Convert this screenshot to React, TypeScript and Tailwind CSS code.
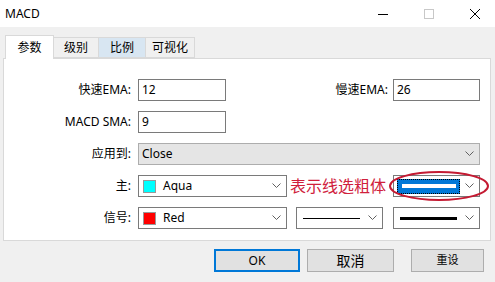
import React from "react";

const font = { fontFamily: '"Noto Sans", "Noto Sans CJK SC", sans-serif' };

const Chevron = () => (
  <svg width="9" height="6" viewBox="0 0 9 6" className="shrink-0">
    <polyline points="0.5,0.5 4.5,4.5 8.5,0.5" fill="none" stroke="#606060" strokeWidth="1" />
  </svg>
);

const TextBox = ({ value, w }: { value: string; w: string }) => (
  <div className={`${w} h-[22px] border border-[#7a7a7a] bg-white flex items-center pl-[3px] text-[12px] shrink-0`}>
    {value}
  </div>
);

const ColorSelect = ({ color, name }: { color: string; name: string }) => (
  <div className="w-[149px] h-[22px] border border-[#7a7a7a] bg-white flex items-center pl-[4px] pr-[5px] text-[12px] shrink-0">
    <span className="w-[13px] h-[13px] border border-[#999]" style={{ backgroundColor: color }} />
    <span className="ml-[7px] flex-1">{name}</span>
    <Chevron />
  </div>
);

const LineSelect = ({ thick, active }: { thick: string; active?: boolean }) => (
  <div className="w-[87px] h-[22px] border border-[#7a7a7a] bg-white flex items-center pl-[3px] pr-[5px] shrink-0">
    {active ? (
      <div className="w-[63px] h-[15px] bg-[#0078d7] border border-dotted border-black flex items-center justify-center">
        <div className="w-[54px] h-[4px] bg-white" />
      </div>
    ) : (
      <div className="w-[63px] flex items-center justify-center">
        <div className={`w-[57px] ${thick} bg-black`} />
      </div>
    )}
    <div className="flex-1" />
    <Chevron />
  </div>
);

const Label = ({ children }: { children: React.ReactNode }) => (
  <div className="w-[134px] pr-[7px] text-right text-[12px] shrink-0">{children}</div>
);

export default function App() {
  return (
    <div className="w-[495px] h-[282px] bg-[#f0f0f0] flex flex-col text-black overflow-hidden" style={font}>
      {/* title bar */}
      <div className="h-[27px] bg-white flex items-center pl-[5px] shrink-0">
        <span className="text-[12px]">MACD</span>
        <div className="flex-1" />
        <svg width="10" height="10" viewBox="0 0 10 10" className="mr-[36px]">
          <line x1="0" y1="5.5" x2="10" y2="5.5" stroke="#000" strokeWidth="1" />
        </svg>
        <svg width="10" height="10" viewBox="0 0 10 10" className="mr-[36px]">
          <rect x="0.5" y="0.5" width="9" height="9" fill="none" stroke="#c8c8c8" strokeWidth="1" />
        </svg>
        <svg width="10" height="10" viewBox="0 0 10 10" className="mr-[15px]">
          <line x1="0" y1="0" x2="10" y2="10" stroke="#000" strokeWidth="1" />
          <line x1="10" y1="0" x2="0" y2="10" stroke="#000" strokeWidth="1" />
        </svg>
      </div>

      {/* tabs */}
      <div className="flex items-end h-[31px] pl-[5px] shrink-0 text-[12px]">
        <div className="w-[49px] h-[24px] bg-white border border-[#d9d9d9] border-b-0 flex items-center justify-center -mb-px relative z-10">
          参数
        </div>
        <div className="w-[45px] h-[21px] bg-[#f0f0f0] border border-[#d9d9d9] border-l-0 flex items-center justify-center">
          级别
        </div>
        <div className="w-[47px] h-[21px] bg-[#d8e6f2] border border-[#d9d9d9] border-l-0 flex items-center justify-center">
          比例
        </div>
        <div className="w-[49px] h-[21px] bg-[#f0f0f0] border border-[#d9d9d9] border-l-0 flex items-center justify-center">
          可视化
        </div>
      </div>

      {/* panel */}
      <div className="ml-[3px] w-[488px] h-[183px] bg-white border border-[#d9d9d9] shrink-0 pt-[20px] flex flex-col gap-[10px] relative">
        <div className="flex items-center">
          <Label>快速EMA:</Label>
          <TextBox value="12" w="w-[88px]" />
          <div className="w-[167px] pr-[5px] text-right text-[12px] shrink-0">慢速EMA:</div>
          <TextBox value="26" w="w-[87px]" />
        </div>
        <div className="flex items-center">
          <Label>MACD SMA:</Label>
          <TextBox value="9" w="w-[88px]" />
        </div>
        <div className="flex items-center">
          <Label>应用到:</Label>
          <div className="w-[342px] h-[22px] border border-[#adadad] bg-[#e5e5e5] flex items-center pl-[3px] pr-[5px] text-[12px] shrink-0">
            <span className="flex-1">Close</span>
            <Chevron />
          </div>
        </div>
        <div className="flex items-center">
          <Label>主:</Label>
          <ColorSelect color="#00ffff" name="Aqua" />
          <div className="w-[106px] pl-[3px] text-[16px] leading-none text-[#d0203c] whitespace-nowrap shrink-0">表示线选粗体</div>
          <LineSelect thick="h-[3px]" active />
        </div>
        <div className="flex items-center">
          <Label>信号:</Label>
          <ColorSelect color="#ff0000" name="Red" />
          <div className="w-[9px] shrink-0" />
          <LineSelect thick="h-px" />
          <div className="w-[10px] shrink-0" />
          <LineSelect thick="h-[3px]" />
        </div>

        {/* annotation ellipse */}
        <svg className="absolute left-[384px] top-[111px]" width="102" height="32" viewBox="0 0 102 32">
          <ellipse cx="51" cy="16" rx="49" ry="14" fill="none" stroke="#c41a32" strokeWidth="2" />
        </svg>
      </div>

      {/* buttons */}
      <div className="flex items-center pt-[8px] text-[12px]">
        <div className="w-[214px] shrink-0" />
        <button className="w-[86px] h-[23px] bg-[#e1e1e1] border-2 border-[#0078d7]">OK</button>
        <div className="w-[7px]" />
        <button className="w-[87px] h-[23px] bg-[#e1e1e1] border border-[#adadad] text-[14px]">取消</button>
        <div className="w-[17px]" />
        <button className="w-[73px] h-[23px] bg-[#e1e1e1] border border-[#adadad] text-[11px]">重设</button>
      </div>
    </div>
  );
}
